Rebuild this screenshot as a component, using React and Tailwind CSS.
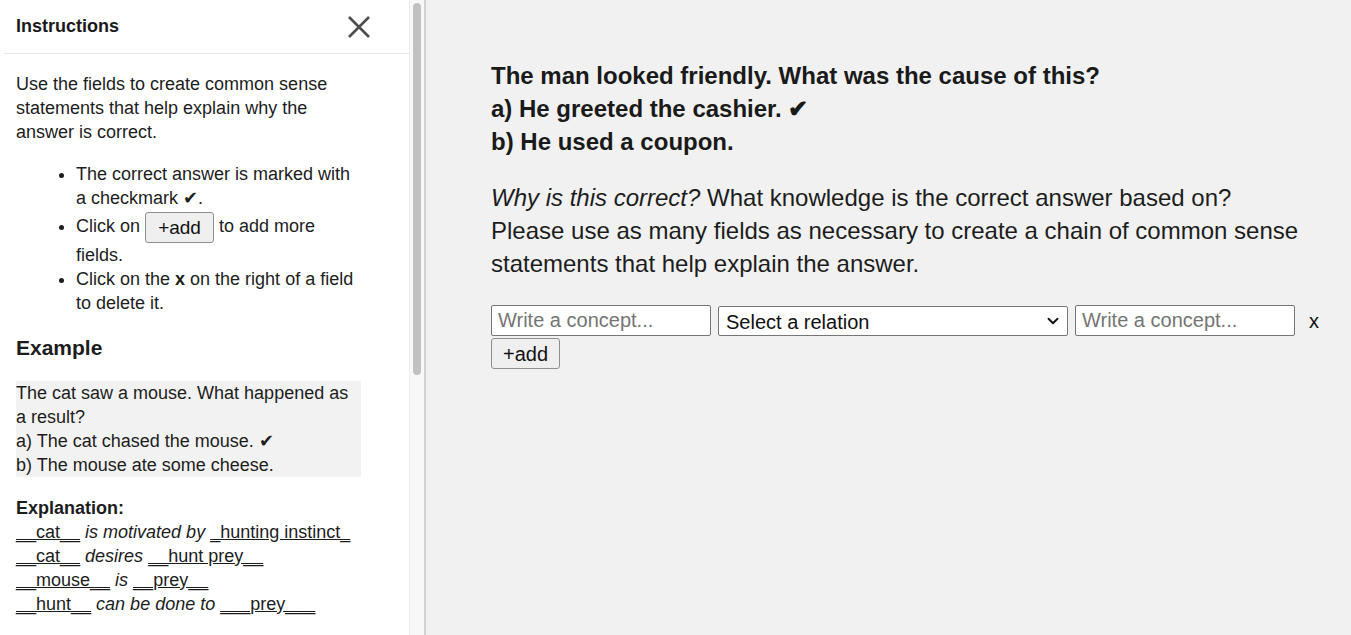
import { ChevronDown } from "lucide-react";

const font = { fontFamily: '"Liberation Sans", Arial, Helvetica, sans-serif' };

function AddButton({ className = "" }) {
  return (
    <button
      type="button"
      className={`inline-flex h-[31px] w-[69px] items-center justify-center rounded-[3px] border border-[#8f8f8f] bg-[#efefef] text-[#111] ${className}`}
    >
      +add
    </button>
  );
}

function Concept() {
  return (
    <input
      className="h-[31px] w-[220px] rounded-[2px] border border-[#767676] bg-white px-[6px] text-[20px] text-[#111] outline-none placeholder:text-[#757575]"
      placeholder="Write a concept..."
    />
  );
}

const explanation = [
  ["__cat__", "is motivated by", "_hunting instinct_"],
  ["__cat__", "desires", "__hunt prey__"],
  ["__mouse__", "is", "__prey__"],
  ["__hunt__", "can be done to", "___prey___"],
];

export default function App() {
  return (
    <div className="flex h-[635px] w-[1351px] overflow-hidden text-[#1d1d1d]" style={font}>
      {/* sidebar */}
      <aside className="w-[409px] shrink-0 overflow-hidden bg-white">
        <div className="ml-[4px] flex h-[54px] items-center justify-between border-b border-[#e6e6e6] pl-[12px] pr-[38px]">
          <h2 className="text-[18px] font-bold text-[#1a1a1a]">Instructions</h2>
          <svg width="24" height="24" viewBox="0 0 24 24" className="text-[#4d4d4d]">
            <path d="M2 2 L22 22 M22 2 L2 22" stroke="currentColor" strokeWidth="2.6" />
          </svg>
        </div>

        <div className="w-[361px] pl-[16px] text-[18px] leading-[24px]">
          <p className="mt-[18px]">
            Use the fields to create common sense statements that help explain why the answer is correct.
          </p>
          <ul className="mt-[18px] list-disc pl-[60px]">
            <li>The correct answer is marked with a checkmark ✔.</li>
            <li className="mt-[2px]">
              Click on <AddButton className="align-middle text-[19px] leading-none" /> to add more fields.
            </li>
            <li>
              Click on the <b>x</b> on the right of a field to delete it.
            </li>
          </ul>

          <h3 className="mt-[19px] text-[21px] font-bold leading-[28px]">Example</h3>
          <div className="mt-[19px] bg-[#f2f2f2]">
            <p>The cat saw a mouse. What happened as a result?</p>
            <p>a) The cat chased the mouse. ✔</p>
            <p>b) The mouse ate some cheese.</p>
          </div>

          <p className="mt-[19px] font-bold">Explanation:</p>
          {explanation.map(([a, rel, b], i) => (
            <p key={i} className="whitespace-nowrap">
              <u>{a}</u> <i>{rel}</i> <u>{b}</u>
            </p>
          ))}
        </div>
      </aside>

      {/* scrollbar */}
      <div className="flex w-[15px] shrink-0 justify-center border-l border-[#ececec] bg-[#f8f8f8] pt-[3px]">
        <div className="h-[372px] w-[8px] rounded-full bg-[#c1c1c1]" />
      </div>
      <div className="w-[2px] shrink-0 bg-[#d2d2d2]" />

      {/* main */}
      <main className="flex-1 bg-[#f0f1f0] pl-[65px] pr-[40px] pt-[59px]">
        <div className="text-[24px] font-bold leading-[33px] text-[#1a1a1a]">
          <p>The man looked friendly. What was the cause of this?</p>
          <p>a) He greeted the cashier. ✔</p>
          <p>b) He used a coupon.</p>
        </div>
        <p className="mt-[23px] w-[820px] text-[24px] leading-[33px]">
          <i>Why is this correct?</i> What knowledge is the correct answer based on? Please use as many fields as
          necessary to create a chain of common sense statements that help explain the answer.
        </p>

        <div className="mt-[25px] flex items-center">
          <Concept />
          <div className="relative ml-[7px]">
            <select className="h-[30px] w-[350px] appearance-none rounded-[2px] border border-[#767676] bg-white px-[7px] text-[20px] text-[#111] outline-none">
              <option>Select a relation</option>
            </select>
            <ChevronDown
              size={18}
              strokeWidth={2.5}
              className="pointer-events-none absolute right-[6px] top-[6px] text-[#111]"
            />
          </div>
          <div className="ml-[7px]">
            <Concept />
          </div>
          <span className="ml-[14px] text-[20px] text-[#111]">x</span>
        </div>
        <AddButton className="mt-[2px] text-[20px]" />
      </main>
    </div>
  );
}
